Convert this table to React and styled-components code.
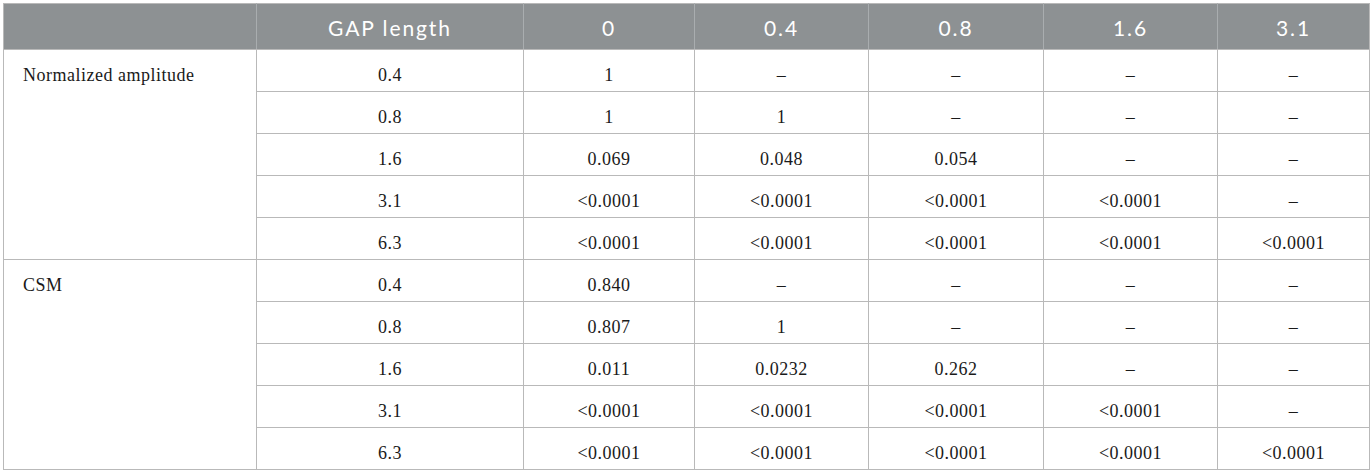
import React from "react";
import styled, { createGlobalStyle } from "styled-components";

const Global = createGlobalStyle`
  html, body { margin: 0; padding: 0; background: #ffffff; }
`;

const Page = styled.div`
  padding: 3px 0 0 3px;
`;

const Table = styled.table`
  border-collapse: collapse;
  table-layout: fixed;
  width: 1366px;
  border: 1px solid #b9b9b9;
`;

const HeadCell = styled.th`
  background: #8d9193;
  color: #ffffff;
  font-family: Lato, "Open Sans", sans-serif;
  font-weight: 400;
  font-size: 21px;
  line-height: 24px;
  letter-spacing: 1.9px;
  text-align: center;
  padding: 12px 8px 9px;
  border-left: 1px solid #a9adaf;
  border-bottom: 1px solid #b9b9b9;
  &:first-child { border-left: none; }
`;

const Cell = styled.td`
  font-family: "Liberation Serif", "Times New Roman", serif;
  font-size: 18px;
  line-height: 22px;
  color: #1a1a1a;
  letter-spacing: 0.5px;
  padding: 14px 8px 5px;
  vertical-align: top;
  text-align: ${(p) => (p.$label ? "left" : "center")};
  padding-left: ${(p) => (p.$label ? "19px" : "8px")};
  border: 1px solid #b9b9b9;
  background: #ffffff;
`;

const widths = [253, 267, 171, 174, 175, 174, 152];
const headers = ["", "GAP length", "0", "0.4", "0.8", "1.6", "3.1"];
const D = "–";
const L = "<0.0001";

const groups = [
  {
    label: "Normalized amplitude",
    rows: [
      ["0.4", "1", D, D, D, D],
      ["0.8", "1", "1", D, D, D],
      ["1.6", "0.069", "0.048", "0.054", D, D],
      ["3.1", L, L, L, L, D],
      ["6.3", L, L, L, L, L],
    ],
  },
  {
    label: "CSM",
    rows: [
      ["0.4", "0.840", D, D, D, D],
      ["0.8", "0.807", "1", D, D, D],
      ["1.6", "0.011", "0.0232", "0.262", D, D],
      ["3.1", L, L, L, L, D],
      ["6.3", L, L, L, L, L],
    ],
  },
];

export default function App() {
  return (
    <Page>
      <Global />
      <Table>
        <colgroup>
          {widths.map((w, i) => (
            <col key={i} style={{ width: w }} />
          ))}
        </colgroup>
        <thead>
          <tr>
            {headers.map((h, i) => (
              <HeadCell key={i}>{h}</HeadCell>
            ))}
          </tr>
        </thead>
        <tbody>
          {groups.map((g) =>
            g.rows.map((r, ri) => (
              <tr key={g.label + ri}>
                {ri === 0 && (
                  <Cell $label rowSpan={g.rows.length}>
                    {g.label}
                  </Cell>
                )}
                {r.map((v, ci) => (
                  <Cell key={ci}>{v}</Cell>
                ))}
              </tr>
            ))
          )}
        </tbody>
      </Table>
    </Page>
  );
}
